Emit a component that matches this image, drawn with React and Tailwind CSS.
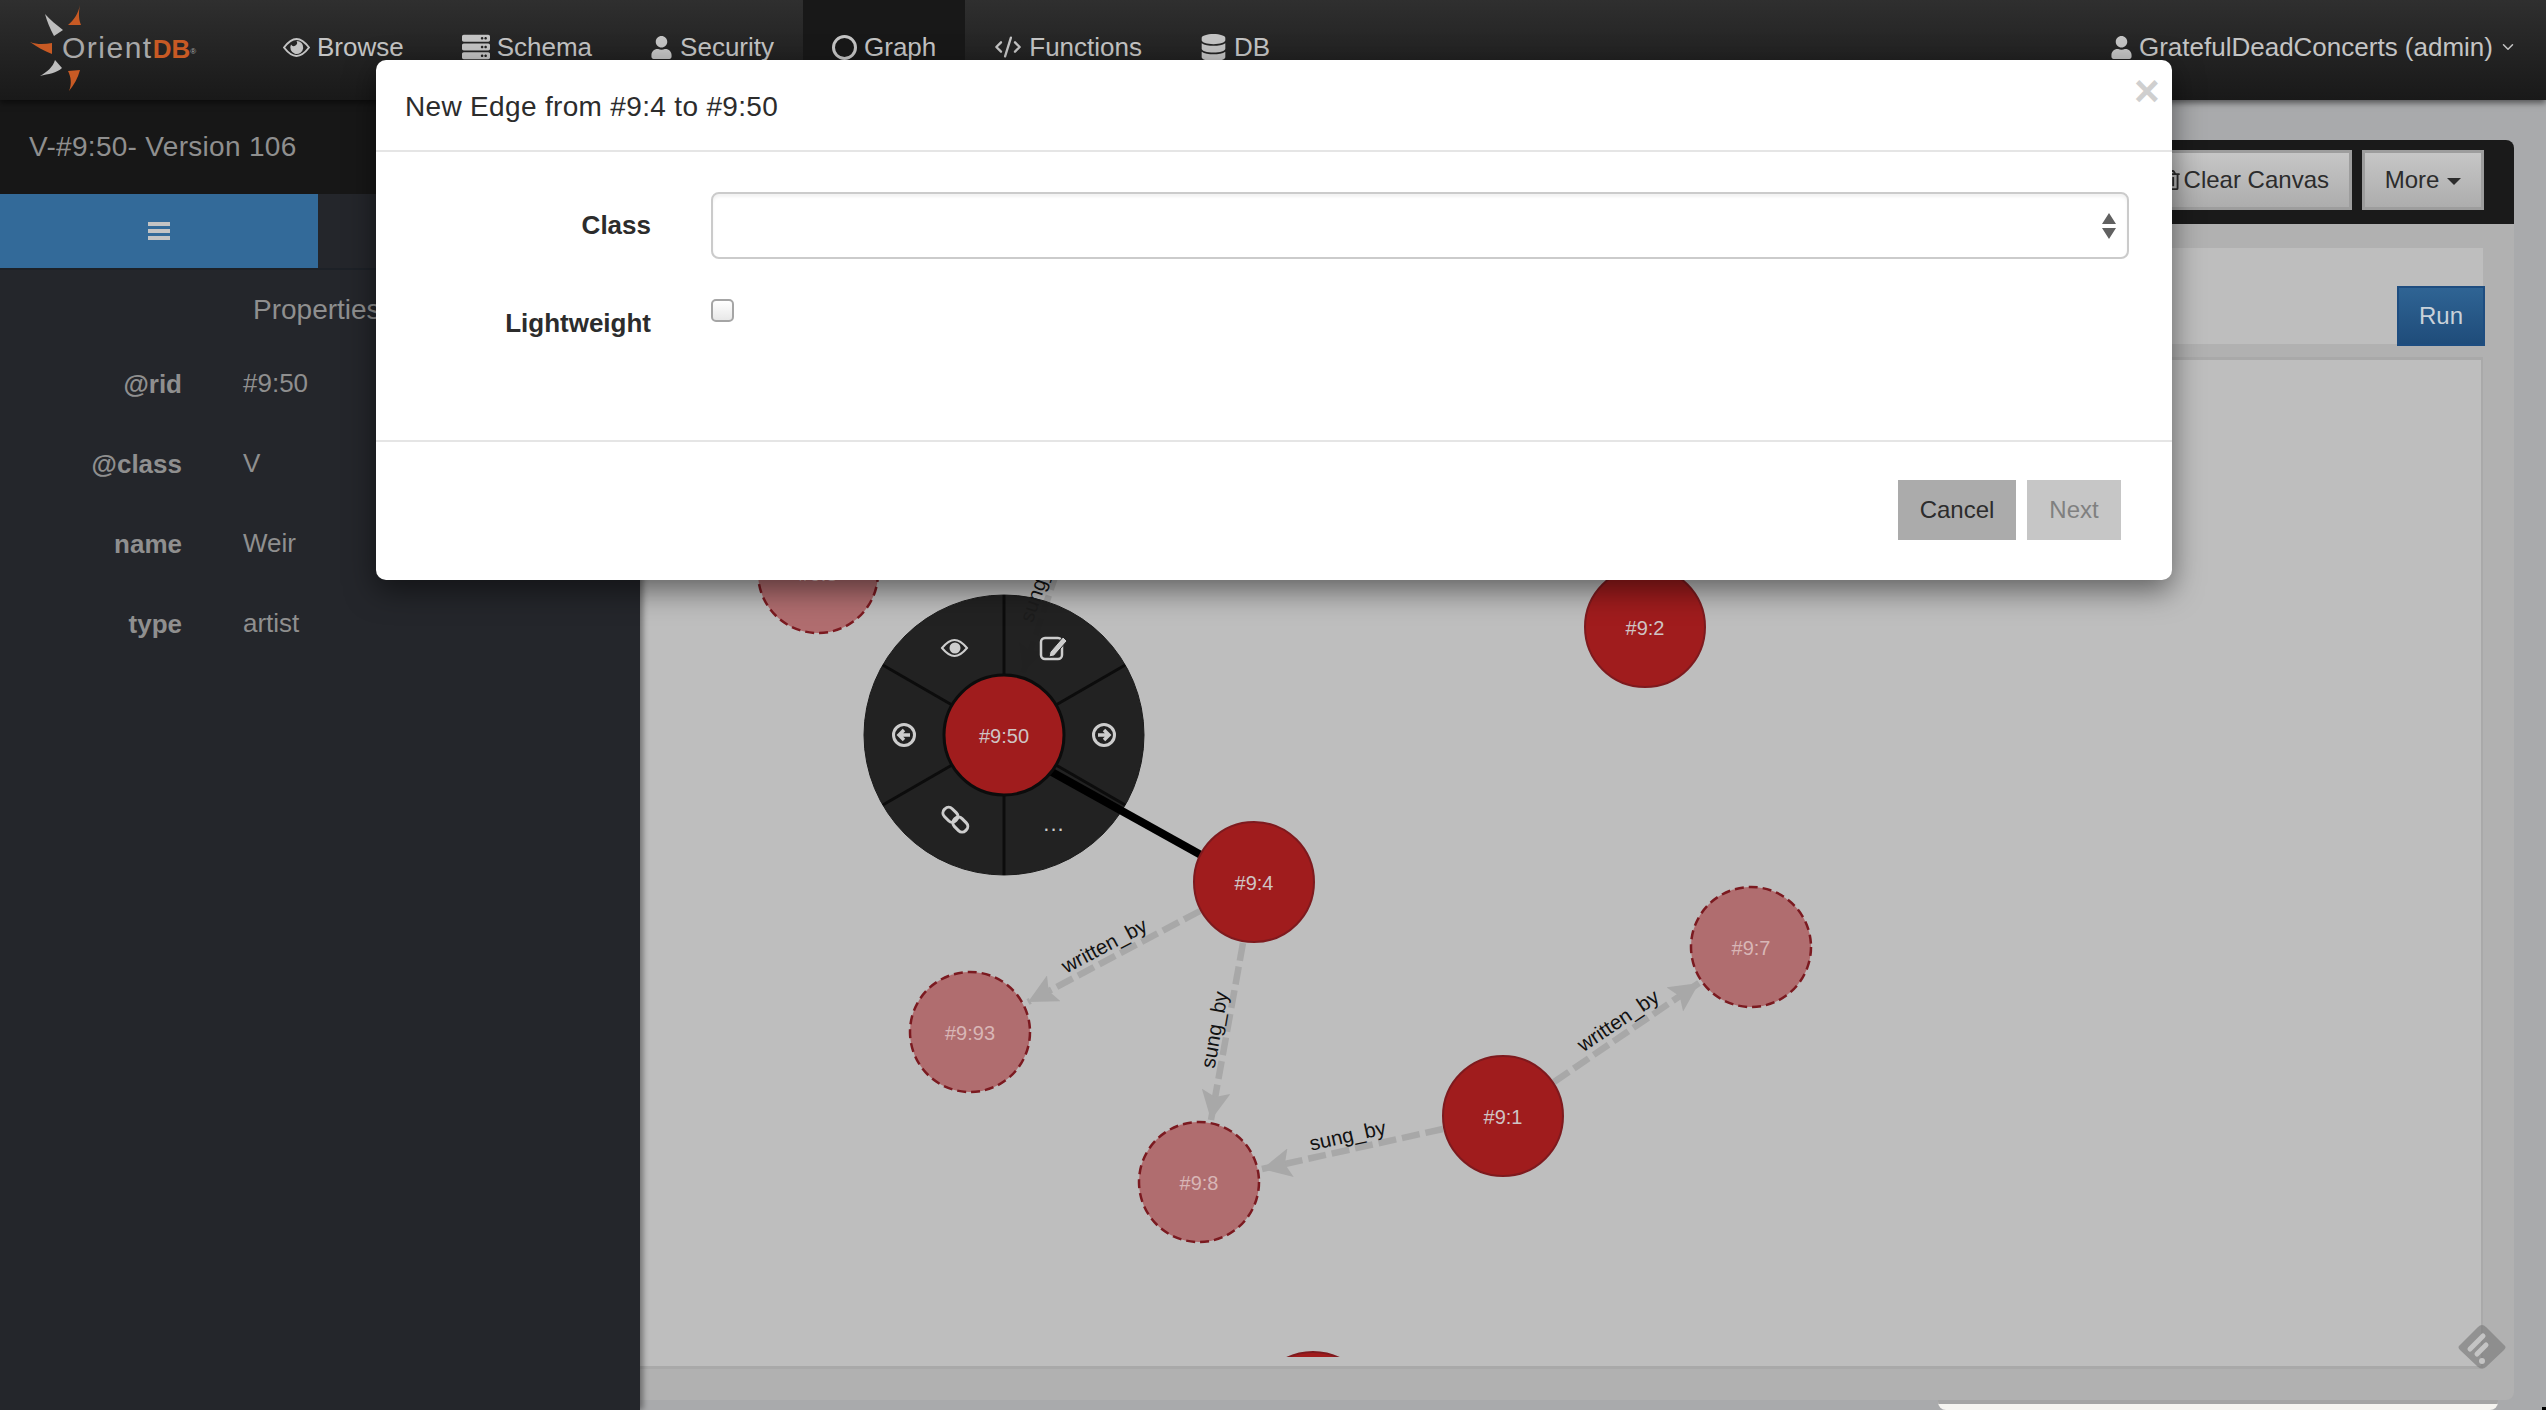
import { CodeXml, ChevronDown } from "lucide-react";
import { FaUser, FaServer, FaDatabase, FaRegTrashAlt } from "react-icons/fa";

const solidNodes = [
  { id: "#9:4", x: 1254, y: 882 },
  { id: "#9:1", x: 1503, y: 1116 },
  { id: "#9:2", x: 1645, y: 627 },
  { id: "", x: 1313, y: 1412 },
];
const ghostNodes = [
  { id: "#9:93", x: 970, y: 1032 },
  { id: "#9:8", x: 1199, y: 1182 },
  { id: "#9:7", x: 1751, y: 947 },
  { id: "#9:3", x: 818, y: 573 },
];
const edges = [
  { x1: 1200, y1: 911, x2: 1028, y2: 1002 },
  { x1: 1243, y1: 943, x2: 1211, y2: 1120 },
  { x1: 1443, y1: 1129, x2: 1262, y2: 1169 },
  { x1: 1554, y1: 1082, x2: 1699, y2: 983 },
  { x1: 1064, y1: 550, x2: 1023, y2: 673 },
];
const labels = [
  { text: "written_by", x: 1105, y: 947, r: -28 },
  { text: "sung_by", x: 1216, y: 1030, r: -80 },
  { text: "sung_by", x: 1348, y: 1137, r: -12.5 },
  { text: "written_by", x: 1619, y: 1022, r: -34 },
  { text: "sung_by", x: 1040, y: 585, r: -71 },
];
const props = [
  ["@rid", "#9:50"],
  ["@class", "V"],
  ["name", "Weir"],
  ["type", "artist"],
];

function Logo() {
  return (
    <svg width="62" height="100" viewBox="0 0 62 100" className="shrink-0">
      <path d="M50 5 C48 14 44 20 38 25 L51 25 C48 18 49 10 50 5Z" fill="#c85a24" />
      <path d="M15 14 C20 20 27 25 33 30 L24 36 C20 29 17 21 15 14Z" fill="#bdbdbd" />
      <path d="M0 42 C8 45 15 44 22 43 L22 54 C14 51 7 47 0 42Z" fill="#c85a24" />
      <path d="M10 76 C18 74 27 73 32 68 L25 60 C23 67 17 72 10 76Z" fill="#bdbdbd" />
      <path d="M38 71 L50 70 C48 78 44 85 39 91 C42 84 41 77 38 71Z" fill="#c85a24" />
    </svg>
  );
}

function EyeIcon() {
  return (
    <svg width="27" height="19" viewBox="0 0 27 19">
      <path d="M1 9.5 C6 3 10 1 13.5 1 S21 3 26 9.5 C21 16 17 18 13.5 18 S6 16 1 9.5Z" fill="none" stroke="currentColor" strokeWidth="2" />
      <path d="M13.5 3 A6.5 6.5 0 1 1 8 6.5 A3 3 0 0 0 13.5 3Z" fill="currentColor" />
    </svg>
  );
}

function Nav({ icon, label, active }) {
  return (
    <div className={`flex h-[100px] items-center gap-[7px] px-[29px] pb-[6px] ${active ? "bg-[#181818]" : ""}`}>
      {icon}
      <span>{label}</span>
    </div>
  );
}

function MenuLines() {
  const lines = [];
  for (let a = 30; a < 360; a += 60) {
    const c = Math.cos((a * Math.PI) / 180);
    const s = Math.sin((a * Math.PI) / 180);
    lines.push(<line key={a} x1={1004 + 60 * c} y1={735 + 60 * s} x2={1004 + 140 * c} y2={735 + 140 * s} stroke="#0c0c0c" strokeWidth="3" />);
  }
  return lines;
}

function Graph() {
  return (
    <svg width="1872" height="997" viewBox="0 0 1872 997" className="block">
      <defs>
        <marker id="arrow" viewBox="0 0 6 6" markerWidth="4.5" markerHeight="4.5" refX="6" refY="3" orient="auto" markerUnits="strokeWidth">
          <path d="M0 0 L6 3 L0 6 L1.2 3Z" fill="#a8a8a8" />
        </marker>
      </defs>
      {/* node positions are page coords, shifted here by the canvas origin */}
      <g transform="translate(-640 -360)">
        {edges.map((e, i) => (
          <line key={i} {...e} stroke="#a8a8a8" strokeWidth="6.5" strokeDasharray="18 6" markerEnd="url(#arrow)" />
        ))}
        {labels.map((l, i) => (
          <text key={i} x={l.x} y={l.y} fontSize="20.5" textAnchor="middle" dominantBaseline="middle" fill="#111" transform={`rotate(${l.r} ${l.x} ${l.y})`}>
            {l.text}
          </text>
        ))}
        {ghostNodes.map((n) => (
          <g key={n.id}>
            <circle cx={n.x} cy={n.y} r="60" fill="#b06d6f" stroke="#7b1a20" strokeWidth="2.5" strokeDasharray="9 5" />
            <text x={n.x} y={n.y + 3} fontSize="20" textAnchor="middle" dominantBaseline="middle" fill="#d8b6b6">{n.id}</text>
          </g>
        ))}
        <circle cx="1004" cy="735" r="140" fill="#1d1d1d" fillOpacity="0.97" stroke="#1b1b1b" strokeWidth="1" />
        <MenuLines />
        <line x1="1050" y1="771" x2="1201" y2="855" stroke="#000" strokeWidth="8" />
        {solidNodes.map((n) => (
          <g key={n.x}>
            <circle cx={n.x} cy={n.y} r="60" fill="#a01c1d" stroke="#7e1a1e" strokeWidth="2" />
            <text x={n.x} y={n.y + 3} fontSize="20" textAnchor="middle" dominantBaseline="middle" fill="#cfc4c4">{n.id}</text>
          </g>
        ))}
        <circle cx="1004" cy="735" r="60" fill="#a01c1d" stroke="#0c0c0c" strokeWidth="3" />
        <text x="1004" y="738" fontSize="20" textAnchor="middle" dominantBaseline="middle" fill="#cfc4c4">#9:50</text>
        {/* radial menu icons */}
        <g fill="none" stroke="#cdcdcd" strokeWidth="3">
          <path d="M942 648 C947 642 951 640 954.500 640 S962 642 967 648 C962 654 958 656 954.500 656 S947 654 942 648Z" strokeWidth="2" />
          <circle cx="955" cy="648" r="5.500" fill="#cdcdcd" stroke="none" />
          <rect x="1041" y="638" width="21" height="21" rx="4" strokeWidth="2.500" />
          <path d="M1050 652 L1063 637 L1067 641 L1054 656 L1049 657Z" fill="#cdcdcd" stroke="#232323" strokeWidth="1" />
          <circle cx="904" cy="735" r="10.500" />
          <path d="M910 735 H899 M904 730 L899 735 L904 740" strokeWidth="3.500" />
          <circle cx="1104" cy="735" r="10.500" />
          <path d="M1098 735 H1109 M1104 730 L1109 735 L1104 740" strokeWidth="3.500" />
          <g transform="rotate(45 955 820)">
            <rect x="940" y="814" width="16" height="11" rx="5" />
            <rect x="954" y="814" width="16" height="11" rx="5" />
          </g>
        </g>
        <text x="1054" y="831" fontSize="22" letterSpacing="1" textAnchor="middle" fill="#cdcdcd">...</text>
      </g>
    </svg>
  );
}

function Modal() {
  return (
    <div className="absolute left-[376px] top-[60px] z-20 flex h-[520px] w-[1796px] flex-col rounded-[10px] bg-white text-[#2c2c2c] shadow-[0_10px_30px_rgba(0,0,0,0.5)]">
      <div className="relative flex h-[92px] shrink-0 items-center border-b-2 border-[#e5e5e5] pl-[29px] pt-[3px] text-[28px] tracking-[0.33px]">
        New Edge from #9:4 to #9:50
        <span className="absolute right-[12px] top-[10px] text-[44px] leading-[42px] font-bold text-[#cfcfcf]">×</span>
      </div>
      <div className="flex h-[290px] shrink-0 flex-col border-b-2 border-[#e5e5e5]">
        <div className="mt-[40px] flex items-center">
          <label className="w-[275px] text-right text-[26px] font-bold">Class</label>
          <div className="ml-[60px] flex h-[67px] w-[1418px] items-center justify-end rounded-[8px] border-2 border-[#cbcbcb] pr-[11px] shadow-[inset_0_3px_3px_rgba(0,0,0,0.05)]">
            <svg width="14" height="26" viewBox="0 0 14 26">
              <path d="M7 0 L14 11 H0Z M7 26 L14 15 H0Z" fill="#616161" />
            </svg>
          </div>
        </div>
        <div className="mt-[38px] flex items-start">
          <label className="w-[275px] pt-[8px] text-right text-[26px] leading-[36px] font-bold">Lightweight</label>
          <div className="mt-[2px] ml-[60px] h-[23px] w-[23px] rounded-[5px] border-2 border-[#a5a5a5] bg-gradient-to-b from-white to-[#e8e8e8]" />
        </div>
      </div>
      <div className="flex flex-1 items-start justify-end gap-[11px] pr-[51px] pt-[38px] text-[24px]">
        <button className="h-[60px] w-[118px] bg-[#ababab] text-[#2c2c2c]">Cancel</button>
        <button className="h-[60px] w-[94px] bg-[#c6c6c6] text-[#808080]">Next</button>
      </div>
    </div>
  );
}

export default function App() {
  return (
    <div className="relative h-[1410px] w-[2546px] overflow-hidden bg-[#a9aaac] font-['Liberation_Sans',sans-serif]">
      <header className="relative z-10 flex h-[100px] items-start bg-gradient-to-b from-[#2f2f2f] to-[#191919] pl-[30px] text-[26px] text-[#c4c4c4] shadow-[0_3px_6px_rgba(0,0,0,0.5)]">
        <div className="relative flex h-[100px] w-[224px] shrink-0 items-center">
          <Logo />
          <span className="absolute left-[32px] top-[30px] whitespace-nowrap text-[30px] leading-[36px] tracking-[1.5px] text-[#a8a8a8]">
            Orient
            <span className="text-[26px] font-bold tracking-normal text-[#c85a24]">DB</span>
            <sup className="text-[8px] text-[#a8a8a8]">®</sup>
          </span>
        </div>
        <Nav icon={<EyeIcon />} label="Browse" />
        <Nav icon={<FaServer size={28} />} label="Schema" />
        <Nav icon={<FaUser size={23} />} label="Security" />
        <Nav active icon={<span className="h-[25px] w-[25px] rounded-full border-[3px] border-[#c4c4c4]" />} label="Graph" />
        <Nav icon={<CodeXml size={28} />} label="Functions" />
        <Nav icon={<FaDatabase size={27} />} label="DB" />
        <div className="ml-auto flex h-[100px] items-center gap-[6px] pr-[29px] pb-[6px]">
          <FaUser size={23} />
          <span>GratefulDeadConcerts (admin)</span>
          <ChevronDown size={18} />
        </div>
      </header>

      <div className="flex h-[1310px]">
        <aside className="relative z-[1] h-full w-[640px] shrink-0 bg-[#24262b] text-[#8f8f8f] shadow-[3px_0_6px_rgba(0,0,0,0.4)]">
          <div className="flex h-[94px] items-center bg-[#171717] pl-[29px] text-[28px] tracking-[0.3px]">V-#9:50- Version 106</div>
          <div className="flex h-[76px] border-b-2 border-[#1d2127]">
            <div className="flex w-[318px] items-center justify-center bg-[#336a99]">
              <div className="flex flex-col gap-[3px]">
                <span className="h-[4px] w-[22px] bg-[#c4c4c4]" />
                <span className="h-[4px] w-[22px] bg-[#c4c4c4]" />
                <span className="h-[4px] w-[22px] bg-[#c4c4c4]" />
              </div>
            </div>
          </div>
          <div className="pl-[253px] pt-[20px] text-[28px] leading-[40px]">Properties</div>
          <div className="mt-[36px] flex flex-col gap-[44px] text-[26px] leading-[36px]">
            {props.map(([k, v]) => (
              <div key={k} className="flex">
                <span className="w-[182px] text-right font-bold">{k}</span>
                <span className="ml-[61px] mt-[-1px]">{v}</span>
              </div>
            ))}
          </div>
        </aside>

        <main className="flex h-[1300px] w-[1874px] shrink-0 flex-col rounded-br-[8px]">
          <div className="mt-[40px] flex h-[84px] items-start justify-end gap-[10px] rounded-tr-[8px] bg-[#1a1a1a] pr-[30px] pt-[10px] text-[24px] text-[#2c2c2c]">
            <button className="flex h-[60px] w-[200px] items-center justify-end gap-[3px] border-[3px] border-[#9d9d9d] bg-gradient-to-b from-[#c6c6c6] to-[#adadad] pr-[20px]">
              <FaRegTrashAlt size={20} />
              Clear Canvas
            </button>
            <button className="flex h-[60px] w-[122px] items-center justify-center gap-2 border-[3px] border-[#9d9d9d] bg-gradient-to-b from-[#c6c6c6] to-[#adadad]">
              More
              <span className="mt-[3px] border-x-[7px] border-t-[7px] border-x-transparent border-t-[#2c2c2c]" />
            </button>
          </div>
          <div className="flex flex-1 flex-col rounded-br-[8px] bg-[#b1b1b1] pt-[24px] pr-[31px]">
            <div className="relative h-[96px] shrink-0 bg-[#bebebe]">
              <button className="absolute right-[-2px] top-[38px] h-[60px] w-[88px] border-2 border-[#1e4d80] bg-gradient-to-b from-[#2f6494] to-[#1f4c7a] text-[24px] text-[#c9d2da]">Run</button>
            </div>
            <div className="mt-[13px] h-[1012px] shrink-0 overflow-hidden border-t-[3px] border-r-[2px] border-b-[3px] border-[#a9a9a9] bg-[#bebebe]">
              <Graph />
            </div>
          </div>
        </main>
      </div>

      <Modal />

      {/* feed badge, bottom right */}
      <svg width="50" height="44" viewBox="0 0 50 44" className="absolute left-[2457px] top-[1325px]">
        <path d="M25 0 Q27 0 29 2 L47 20 Q50 22 47 25 L29 42 Q25 45 21 42 L3 25 Q0 22 3 20 L21 2 Q23 0 25 0Z" fill="#7f7f7f" fillOpacity="0.7" />
        <path d="M13 24 L26 11 M20 29 L29 20" stroke="#c4c4c4" strokeWidth="5" strokeLinecap="round" />
        <circle cx="25" cy="36" r="3" fill="#c4c4c4" />
      </svg>
      <div className="absolute left-[1938px] top-[1400px] h-[10px] w-[560px] rounded-b-[8px] border-t-[4px] border-[#a4a4a4] bg-[#f5f4f0]" />
      <div className="absolute right-0 bottom-0 h-[3px] w-[4px] bg-black" />
    </div>
  );
}
